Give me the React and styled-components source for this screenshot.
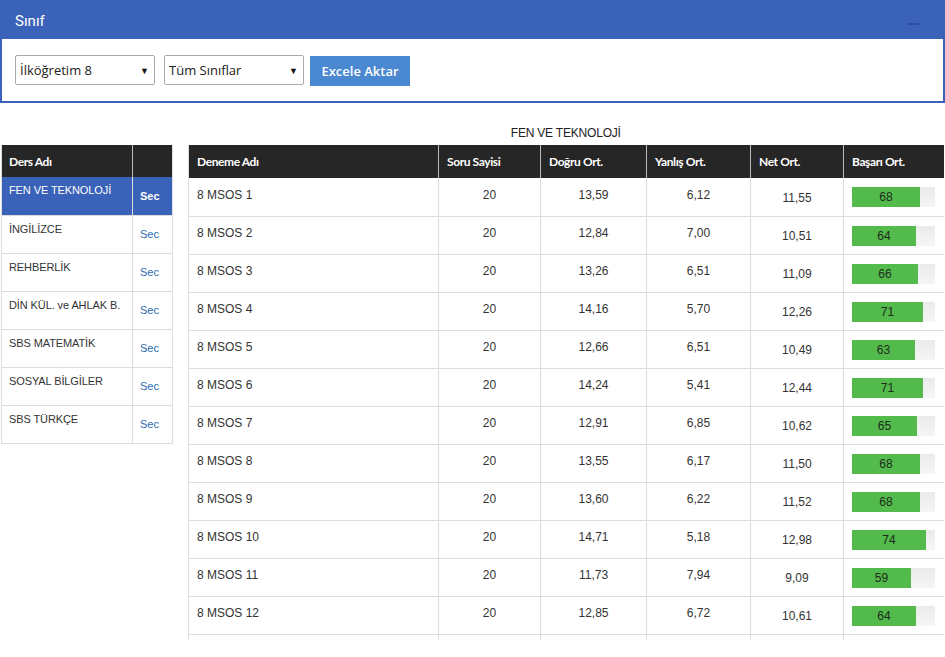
import React from "react";
import styled, { createGlobalStyle } from "styled-components";

const Global = createGlobalStyle`
  html, body { margin: 0; padding: 0; background: #fff; }
  body { font-family: "Liberation Sans", Arial, sans-serif; color: #333; }
  * { box-sizing: border-box; }
`;

const Panel = styled.section`
  border: 2px solid #3a62b8;
  border-top: none;
  width: 945px;
`;

const PanelHead = styled.header`
  height: 39px;
  background: #3a62b8;
  display: flex;
  align-items: center;
  justify-content: space-between;
  padding: 2px 24px 0 13px;
`;

const PanelTitle = styled.h1`
  margin: 0;
  font-family: Roboto, "Liberation Sans", sans-serif;
  font-weight: 400;
  font-size: 15px;
  color: #fff;
`;

const Minimize = styled.span`
  width: 12px;
  height: 2px;
  background: #2c509e;
  margin-top: 6px;
`;

const PanelBody = styled.div`
  display: flex;
  align-items: flex-start;
  gap: 9px;
  padding: 16px 13px 15px;
`;

const Select = styled.div`
  width: ${p => p.$w}px;
  height: 30px;
  border: 1px solid #aaa;
  border-radius: 2px;
  display: flex;
  align-items: center;
  justify-content: space-between;
  padding: 0 5px 0 4px;
  font-family: "Open Sans", sans-serif;
  font-size: 13px;
  color: #222;
`;

const Arrow = styled.span`
  font-size: 9px;
  color: #111;
`;

const Button = styled.button`
  margin-left: -3px;
  margin-top: 1px;
  width: 100px;
  height: 30px;
  border: none;
  background: #4a88d2;
  color: #fff;
  font-family: "Open Sans", sans-serif;
  font-weight: 600;
  font-size: 13px;
  padding: 0;
`;

const Content = styled.div`
  display: flex;
  align-items: flex-start;
  gap: 15px;
  padding: 17px 2px 0 1px;
`;

const LeftTable = styled.table`
  margin-top: 25px;
  border-collapse: collapse;
  width: 171px;
  table-layout: fixed;
  border: 1px solid #ddd;
  border-top: none;
`;

const RightCol = styled.div`
  flex: 1;
  display: flex;
  flex-direction: column;
`;

const Caption = styled.div`
  height: 25px;
  text-align: center;
  font-size: 12px;
  color: #222;
  padding-top: 6px;
  letter-spacing: -0.2px;
`;

const Scroll = styled.div`
  height: 495px;
  overflow: hidden;
`;

const DataTable = styled.table`
  border-collapse: collapse;
  width: 755px;
  table-layout: fixed;
  border-left: 1px solid #ddd;
`;

const Th = styled.th`
  background: #262626;
  color: #fff;
  font-family: Lato, sans-serif;
  font-weight: 700;
  font-size: 12px;
  letter-spacing: -0.4px;
  text-align: left;
  height: ${p => (p.$small ? 32 : 33)}px;
  padding: 0 0 0 ${p => (p.$small ? 7 : 8)}px;
  border-left: 1px solid #bbb;
  &:first-child { border-left: none; }
`;

const Row = styled.tr`
  background: ${p => (p.$active ? "#3a62b8" : "#fff")};
  border-bottom: 1px solid #ddd;
`;

const NameCell = styled.td`
  height: 38px;
  padding: 7px 0 0 7px;
  vertical-align: top;
  font-size: 11px;
  letter-spacing: -0.1px;
  color: ${p => (p.$active ? "#fff" : "#333")};
  border-left: 1px solid #ddd;
  white-space: nowrap;
`;

const SecCell = styled.td`
  padding: 0 0 0 7px;
  font-size: 11px;
  color: ${p => (p.$active ? "#fff" : "#2a6ab5")};
  font-weight: ${p => (p.$active ? 700 : 400)};
  border-left: 1px solid #ddd;
`;

const Td = styled.td`
  height: 38px;
  font-size: 12px;
  color: #333;
  border-left: 1px solid #ddd;
  text-align: ${p => (p.$left ? "left" : "center")};
  padding: ${p => (p.$low ? "2px 0 0 0" : "0 0 4px 0")};
  padding-left: ${p => (p.$left ? "8px" : "0")};
`;

const BarCell = styled.td`
  border-left: 1px solid #ddd;
  padding: 1px 0 0 8px;
`;

const Track = styled.div`
  width: 83px;
  height: 20px;
  background: linear-gradient(#ebebeb, #f5f5f5);
`;

const Fill = styled.div`
  height: 20px;
  background: #52bb4c;
  color: #1e2a1e;
  font-size: 12px;
  line-height: 20px;
  text-align: center;
`;

const subjects = [
  "FEN VE TEKNOLOJİ",
  "İNGİLİZCE",
  "REHBERLİK",
  "DİN KÜL. ve AHLAK B.",
  "SBS MATEMATİK",
  "SOSYAL BİLGİLER",
  "SBS TÜRKÇE",
];

const rows = [
  ["13,59", "6,12", "11,55", 68],
  ["12,84", "7,00", "10,51", 64],
  ["13,26", "6,51", "11,09", 66],
  ["14,16", "5,70", "12,26", 71],
  ["12,66", "6,51", "10,49", 63],
  ["14,24", "5,41", "12,44", 71],
  ["12,91", "6,85", "10,62", 65],
  ["13,55", "6,17", "11,50", 68],
  ["13,60", "6,22", "11,52", 68],
  ["14,71", "5,18", "12,98", 74],
  ["11,73", "7,94", "9,09", 59],
  ["12,85", "6,72", "10,61", 64],
];

export default function App() {
  return (
    <>
      <Global />
      <Panel>
        <PanelHead>
          <PanelTitle>Sınıf</PanelTitle>
          <Minimize />
        </PanelHead>
        <PanelBody>
          <Select $w={140}>
            <span>İlköğretim 8</span>
            <Arrow>▼</Arrow>
          </Select>
          <Select $w={140}>
            <span>Tüm Sınıflar</span>
            <Arrow>▼</Arrow>
          </Select>
          <Button>Excele Aktar</Button>
        </PanelBody>
      </Panel>
      <Content>
        <LeftTable>
          <colgroup>
            <col style={{ width: 131 }} />
            <col style={{ width: 40 }} />
          </colgroup>
          <thead>
            <tr>
              <Th $small>Ders Adı</Th>
              <Th $small></Th>
            </tr>
          </thead>
          <tbody>
            {subjects.map((s, i) => (
              <Row key={s} $active={i === 0}>
                <NameCell $active={i === 0}>{s}</NameCell>
                <SecCell $active={i === 0}>Sec</SecCell>
              </Row>
            ))}
          </tbody>
        </LeftTable>
        <RightCol>
          <Caption>FEN VE TEKNOLOJİ</Caption>
          <Scroll>
            <DataTable>
              <colgroup>
                <col style={{ width: 250 }} />
                <col style={{ width: 102 }} />
                <col style={{ width: 106 }} />
                <col style={{ width: 104 }} />
                <col style={{ width: 93 }} />
                <col style={{ width: 100 }} />
              </colgroup>
              <thead>
                <tr>
                  <Th>Deneme Adı</Th>
                  <Th>Soru Sayisi</Th>
                  <Th>Doğru Ort.</Th>
                  <Th>Yanlış Ort.</Th>
                  <Th>Net Ort.</Th>
                  <Th>Başarı Ort.</Th>
                </tr>
              </thead>
              <tbody>
                {rows.map((r, i) => (
                  <Row key={i}>
                    <Td $left>8 MSOS {i + 1}</Td>
                    <Td>20</Td>
                    <Td>{r[0]}</Td>
                    <Td>{r[1]}</Td>
                    <Td $low>{r[2]}</Td>
                    <BarCell>
                      <Track>
                        <Fill style={{ width: r[3] }}>{r[3]}</Fill>
                      </Track>
                    </BarCell>
                  </Row>
                ))}
                <Row>
                  <Td $left />
                  <Td />
                  <Td />
                  <Td />
                  <Td />
                  <BarCell />
                </Row>
              </tbody>
            </DataTable>
          </Scroll>
        </RightCol>
      </Content>
    </>
  );
}
